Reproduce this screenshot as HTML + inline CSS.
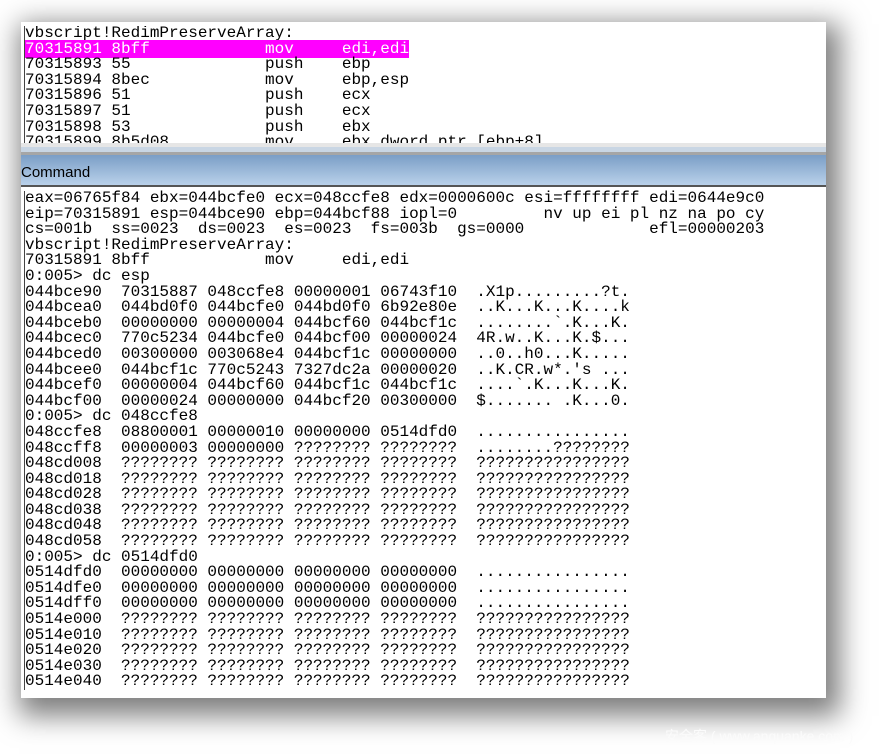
<!DOCTYPE html>
<html><head><meta charset="utf-8"><style>
html,body{margin:0;padding:0;background:#fff;width:881px;height:754px;overflow:hidden;position:relative}
.box{position:absolute;left:21px;top:22px;width:805px;height:676px;background:#fff;box-shadow:6px 10px 26px 8px rgba(0,0,0,.5);overflow:hidden}
pre{margin:0;font-family:"Liberation Mono","Courier New",monospace;font-size:16px;line-height:15.6px;color:#000;letter-spacing:0}
.top{position:absolute;left:3px;top:4px;height:119px;overflow:hidden;border-left:1px solid #444;padding-left:0}
.hl{background:#ff00ff;color:#fff}
.strip1{position:absolute;left:0;top:121px;width:805px;height:4px;background:#e6e6e6}
.strip2{position:absolute;left:0;top:125px;width:805px;height:5px;background:#c9d6e4}
.strip3{position:absolute;left:0;top:130px;width:805px;height:3px;background:#a6a6a6}
.title{position:absolute;left:0;top:133px;width:805px;height:30px;background:linear-gradient(#7b9ec6,#b9d1ea);border-bottom:2px solid #555}
.title span{position:absolute;left:0;top:9px;font-family:"Liberation Sans",sans-serif;font-size:15px;color:#000}
.cmd{position:absolute;left:3px;top:169px;border-left:1px solid #444}
.wm{position:absolute;left:665px;top:726px;font-family:"Liberation Sans","Noto Sans CJK SC",sans-serif;font-size:14px;color:#fbfbfb}
</style></head><body>
<div class="box">
<pre class="top">vbscript!RedimPreserveArray:
<span class="hl">70315891 8bff            mov     edi,edi</span>
70315893 55              push    ebp
70315894 8bec            mov     ebp,esp
70315896 51              push    ecx
70315897 51              push    ecx
70315898 53              push    ebx
70315899 8b5d08          mov     ebx,dword ptr [ebp+8]</pre>
<div class="strip1"></div><div class="strip2"></div><div class="strip3"></div>
<div class="title"><span>Command</span></div>
<pre class="cmd">eax=06765f84 ebx=044bcfe0 ecx=048ccfe8 edx=0000600c esi=ffffffff edi=0644e9c0
eip=70315891 esp=044bce90 ebp=044bcf88 iopl=0         nv up ei pl nz na po cy
cs=001b  ss=0023  ds=0023  es=0023  fs=003b  gs=0000             efl=00000203
vbscript!RedimPreserveArray:
70315891 8bff            mov     edi,edi
0:005&gt; dc esp
044bce90  70315887 048ccfe8 00000001 06743f10  .X1p.........?t.
044bcea0  044bd0f0 044bcfe0 044bd0f0 6b92e80e  ..K...K...K....k
044bceb0  00000000 00000004 044bcf60 044bcf1c  ........`.K...K.
044bcec0  770c5234 044bcfe0 044bcf00 00000024  4R.w..K...K.$...
044bced0  00300000 003068e4 044bcf1c 00000000  ..0..h0...K.....
044bcee0  044bcf1c 770c5243 7327dc2a 00000020  ..K.CR.w*.'s ...
044bcef0  00000004 044bcf60 044bcf1c 044bcf1c  ....`.K...K...K.
044bcf00  00000024 00000000 044bcf20 00300000  $....... .K...0.
0:005&gt; dc 048ccfe8
048ccfe8  08800001 00000010 00000000 0514dfd0  ................
048ccff8  00000003 00000000 ???????? ????????  ........????????
048cd008  ???????? ???????? ???????? ????????  ????????????????
048cd018  ???????? ???????? ???????? ????????  ????????????????
048cd028  ???????? ???????? ???????? ????????  ????????????????
048cd038  ???????? ???????? ???????? ????????  ????????????????
048cd048  ???????? ???????? ???????? ????????  ????????????????
048cd058  ???????? ???????? ???????? ????????  ????????????????
0:005&gt; dc 0514dfd0
0514dfd0  00000000 00000000 00000000 00000000  ................
0514dfe0  00000000 00000000 00000000 00000000  ................
0514dff0  00000000 00000000 00000000 00000000  ................
0514e000  ???????? ???????? ???????? ????????  ????????????????
0514e010  ???????? ???????? ???????? ????????  ????????????????
0514e020  ???????? ???????? ???????? ????????  ????????????????
0514e030  ???????? ???????? ???????? ????????  ????????????????
0514e040  ???????? ???????? ???????? ????????  ????????????????</pre>
</div>
<div class="wm">安全客 ( www.anquanke.com )</div>
</body></html>
